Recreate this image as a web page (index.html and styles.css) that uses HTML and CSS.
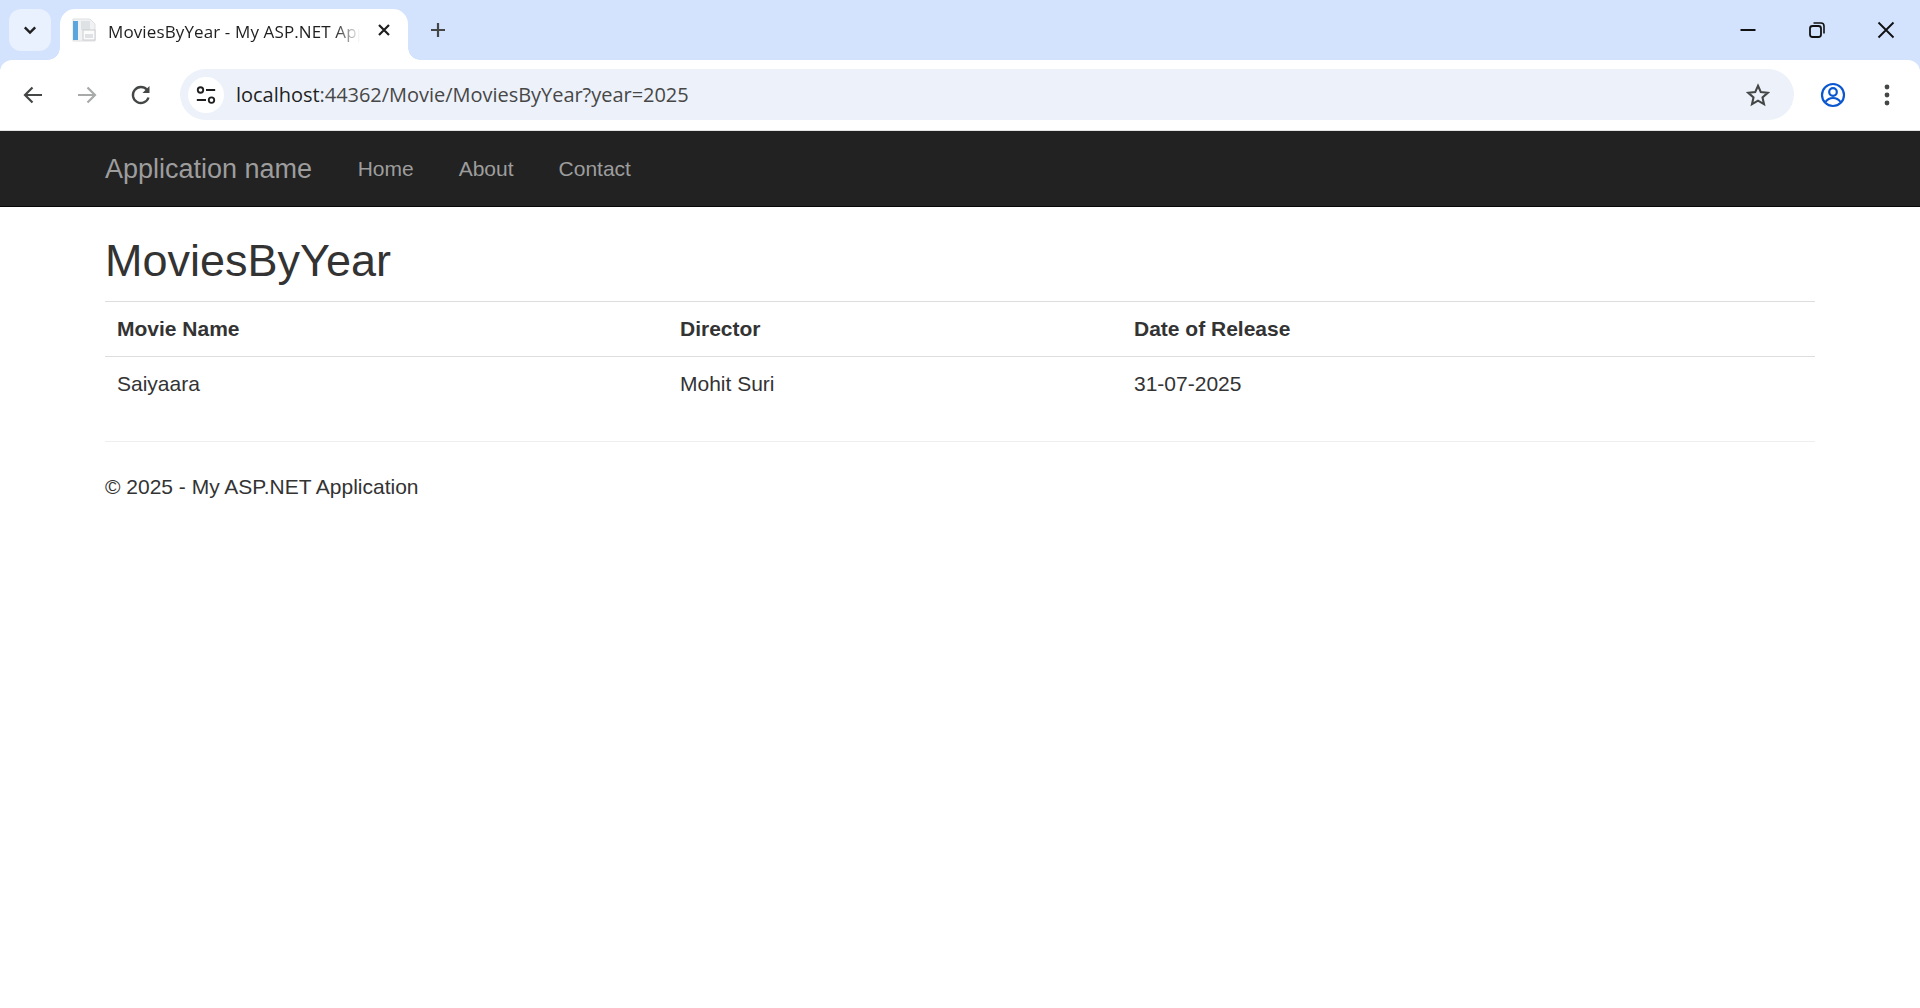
FILE: index.html
```html
<!DOCTYPE html>
<html lang="en">
<head>
  <meta charset="UTF-8">
  <meta name="viewport" content="width=device-width, initial-scale=1.0">
  <title>MoviesByYear - My ASP.NET Application</title>
  <link rel="stylesheet" href="styles.css">
</head>
<body>
  <header class="browser">
    <div class="tabstrip">
      <button class="tab-search">
        <svg width="18" height="18" viewBox="0 0 18 18"><path d="M3.800 6.300 9 11.500l5.200-5.200" fill="none" stroke="#1f1f1f" stroke-width="2.400"/></svg>
      </button>
      <div class="tab">
        <svg class="favicon" width="24" height="24" viewBox="0 0 24 24">
          <path d="M6 1h12l5 5v17H1V1z" fill="#f1f2f3" stroke="#dfe0e1"/>
          <rect x="1" y="3" width="5" height="19" fill="#5ba6dc"/>
          <rect x="9" y="3" width="9" height="9" fill="#dfe2e5"/>
          <rect x="11" y="12" width="12" height="10" fill="#fbfbfb" stroke="#c9ccd0"/>
          <rect x="13" y="16" width="8" height="4" fill="#dfe2e5"/>
        </svg>
        <span class="tab-title">MoviesByYear - My ASP.NET Application</span>
        <svg class="tab-close" width="14" height="14" viewBox="0 0 14 14"><path d="M2 2l10 10M12 2 2 12" stroke="#1f1f1f" stroke-width="2.200" fill="none"/></svg>
      </div>
      <svg class="new-tab" width="18" height="18" viewBox="0 0 18 18"><path d="M9 2v14M2 9h14" stroke="#444746" stroke-width="2.200" fill="none"/></svg>
      <div class="window-btns">
        <svg width="18" height="18" viewBox="0 0 18 18"><path d="M1.500 9h15" stroke="#111" stroke-width="2" fill="none"/></svg>
        <svg width="18" height="18" viewBox="0 0 18 18"><rect x="2" y="5" width="11" height="11" rx="2.500" fill="none" stroke="#111" stroke-width="1.800"/><path d="M5.500 2h7.500a3 3 0 0 1 3 3v7.500" fill="none" stroke="#111" stroke-width="1.600"/></svg>
        <svg width="18" height="18" viewBox="0 0 18 18"><path d="M1.500 1.500l15 15M16.500 1.500l-15 15" stroke="#111" stroke-width="1.900" fill="none"/></svg>
      </div>
    </div>
    <div class="toolbar">
      <svg class="tool" width="24" height="24" viewBox="0 0 24 24"><path d="M21 12H4.500M11.500 4.500 4 12l7.500 7.500" fill="none" stroke="#444746" stroke-width="2.200"/></svg>
      <svg class="tool" width="24" height="24" viewBox="0 0 24 24"><path d="M3 12h16.500M12.500 4.500 20 12l-7.500 7.500" fill="none" stroke="#a8a9a9" stroke-width="2.200"/></svg>
      <svg class="tool" width="24" height="24" viewBox="0 0 24 24"><path d="M19.500 14.500A8 8 0 1 1 18 6.800" fill="none" stroke="#444746" stroke-width="2.300"/><path d="M20.500 3v7h-7z" fill="#444746"/></svg>
      <div class="omnibox">
        <span class="site-info">
          <svg width="24" height="24" viewBox="0 0 24 24"><circle cx="6" cy="6.500" r="3" fill="none" stroke="#1f1f1f" stroke-width="2"/><path d="M12 6.500h10M2 17.500h10" stroke="#1f1f1f" stroke-width="2.200" fill="none"/><circle cx="18" cy="17.500" r="3" fill="none" stroke="#1f1f1f" stroke-width="2"/></svg>
        </span>
        <span class="url"><span class="url-host">localhost</span>:44362/Movie/MoviesByYear?year=2025</span>
        <svg class="star" width="24" height="24" viewBox="0 0 24 24"><path d="M12 2.800l2.800 6.300 6.900.7-5.200 4.600 1.500 6.800-6-3.500-6 3.500 1.500-6.800-5.200-4.600 6.900-.7z" fill="none" stroke="#444746" stroke-width="2.100"/></svg>
      </div>
      <svg class="profile" width="26" height="26" viewBox="0 0 26 26"><circle cx="13" cy="13" r="11" fill="none" stroke="#0b57d0" stroke-width="2.200"/><circle cx="13" cy="10" r="3.800" fill="none" stroke="#0b57d0" stroke-width="2.200"/><path d="M5.500 20c2-3 4.800-4 7.500-4s5.500 1 7.500 4" fill="none" stroke="#0b57d0" stroke-width="2.200"/></svg>
      <svg class="menu" width="8" height="24" viewBox="0 0 8 24"><circle cx="4" cy="4" r="2.400" fill="#444746"/><circle cx="4" cy="12" r="2.400" fill="#444746"/><circle cx="4" cy="20" r="2.400" fill="#444746"/></svg>
    </div>
  </header>

  <nav class="navbar">
    <div class="container nav-row">
      <a class="brand" href="#">Application name</a>
      <a class="nav-link" href="#">Home</a>
      <a class="nav-link" href="#">About</a>
      <a class="nav-link" href="#">Contact</a>
    </div>
  </nav>

  <main class="container">
    <h2>MoviesByYear</h2>
    <table>
      <thead>
        <tr>
          <th class="col-name">Movie Name</th>
          <th class="col-director">Director</th>
          <th>Date of Release</th>
        </tr>
      </thead>
      <tbody>
        <tr>
          <td>Saiyaara</td>
          <td>Mohit Suri</td>
          <td>31-07-2025</td>
        </tr>
      </tbody>
    </table>
    <hr>
    <footer>
      <p>&copy; 2025 - My ASP.NET Application</p>
    </footer>
  </main>
</body>
</html>
```

FILE: styles.css
```css
* {
  box-sizing: border-box;
}

body {
  margin: 0;
  font-family: "Liberation Sans", Arial, sans-serif;
  font-size: 21px;
  line-height: 30px;
  color: #333;
  background-color: #fff;
}

a {
  text-decoration: none;
}

/* browser chrome */
.browser {
  height: 131px;
  background-color: #d3e3fd;
}

.tabstrip {
  display: flex;
  align-items: flex-start;
  height: 60px;
  padding: 9px 0 0 9px;
}

.tab-search {
  display: flex;
  align-items: center;
  justify-content: center;
  width: 42px;
  height: 42px;
  padding: 0;
  border: none;
  border-radius: 12px;
  background-color: #e9f0fe;
}

.tab {
  position: relative;
  display: flex;
  align-items: center;
  width: 348px;
  height: 51px;
  margin-left: 9px;
  padding: 0 0 9px 12px;
  background-color: #fff;
  border-radius: 15px 15px 0 0;
}

.tab::before,
.tab::after {
  content: "";
  position: absolute;
  bottom: 0;
  width: 12px;
  height: 12px;
}

.tab::before {
  left: -12px;
  background: radial-gradient(circle at 0 0, #d3e3fd 11.5px, #fff 12px);
}

.tab::after {
  right: -12px;
  background: radial-gradient(circle at 100% 0, #d3e3fd 11.5px, #fff 12px);
}

.favicon {
  flex: none;
}

.tab-title {
  width: 252px;
  margin: 4px 0 0 12px;
  overflow: hidden;
  white-space: nowrap;
  font-family: "Open Sans", sans-serif;
  font-size: 17px;
  letter-spacing: 0.12px;
  line-height: 24px;
  color: #1f1f1f;
  -webkit-mask-image: linear-gradient(to right, #000 90%, transparent);
  mask-image: linear-gradient(to right, #000 90%, transparent);
}

.tab-close {
  flex: none;
  margin-left: 17px;
}

.new-tab {
  margin: 12px 0 0 21px;
}

.window-btns {
  display: flex;
  gap: 51px;
  margin: 12px 25px 0 auto;
}

.toolbar {
  display: flex;
  align-items: center;
  height: 71px;
  padding: 0 0 1px 21px;
  background-color: #fff;
  border-radius: 12px 12px 0 0;
  border-bottom: 1px solid #e3e3e3;
}

.tool {
  flex: none;
  margin-right: 30px;
}

.omnibox {
  display: flex;
  align-items: center;
  width: 1614px;
  height: 51px;
  margin-left: -3px;
  padding: 0 18px 0 8px;
  background-color: #edf2fa;
  border-radius: 26px;
}

.site-info {
  display: flex;
  align-items: center;
  justify-content: center;
  width: 36px;
  height: 36px;
  background-color: #fff;
  border-radius: 50%;
}

.site-info svg {
  width: 22px;
  height: 22px;
}

.url {
  margin-left: 12px;
  font-family: "Open Sans", sans-serif;
  font-size: 20px;
  letter-spacing: -0.03px;
  line-height: 28px;
  color: #474747;
  white-space: nowrap;
}

.url-host {
  color: #1f1f1f;
}

.star {
  margin-right: 6px;
  margin-left: auto;
}

.profile {
  margin-left: 26px;
}

.menu {
  margin-left: 37px;
}

/* site */
.container {
  width: 1710px;
  margin: 0 auto;
}

.navbar {
  height: 76px;
  background-color: #222;
  border-bottom: 1px solid #080808;
}

.nav-row {
  display: flex;
  align-items: center;
  height: 75px;
}

.brand {
  margin-right: 23px;
  font-size: 27px;
  color: #9d9d9d;
}

.nav-link {
  padding: 0 22.5px;
  font-size: 21px;
  color: #9d9d9d;
}

h2 {
  margin: 29px 0 15px;
  font-size: 45px;
  font-weight: 500;
  line-height: 50px;
  color: #333;
}

table {
  width: 100%;
  border-collapse: collapse;
  border-spacing: 0;
}

th,
td {
  padding: 12px;
  text-align: left;
  border-top: 1px solid #ddd;
}

.col-name {
  width: 563px;
}

.col-director {
  width: 454px;
}

hr {
  margin: 30px 0;
  border: 0;
  border-top: 1px solid #eee;
}

footer p {
  margin: 0 0 15px;
}
```
